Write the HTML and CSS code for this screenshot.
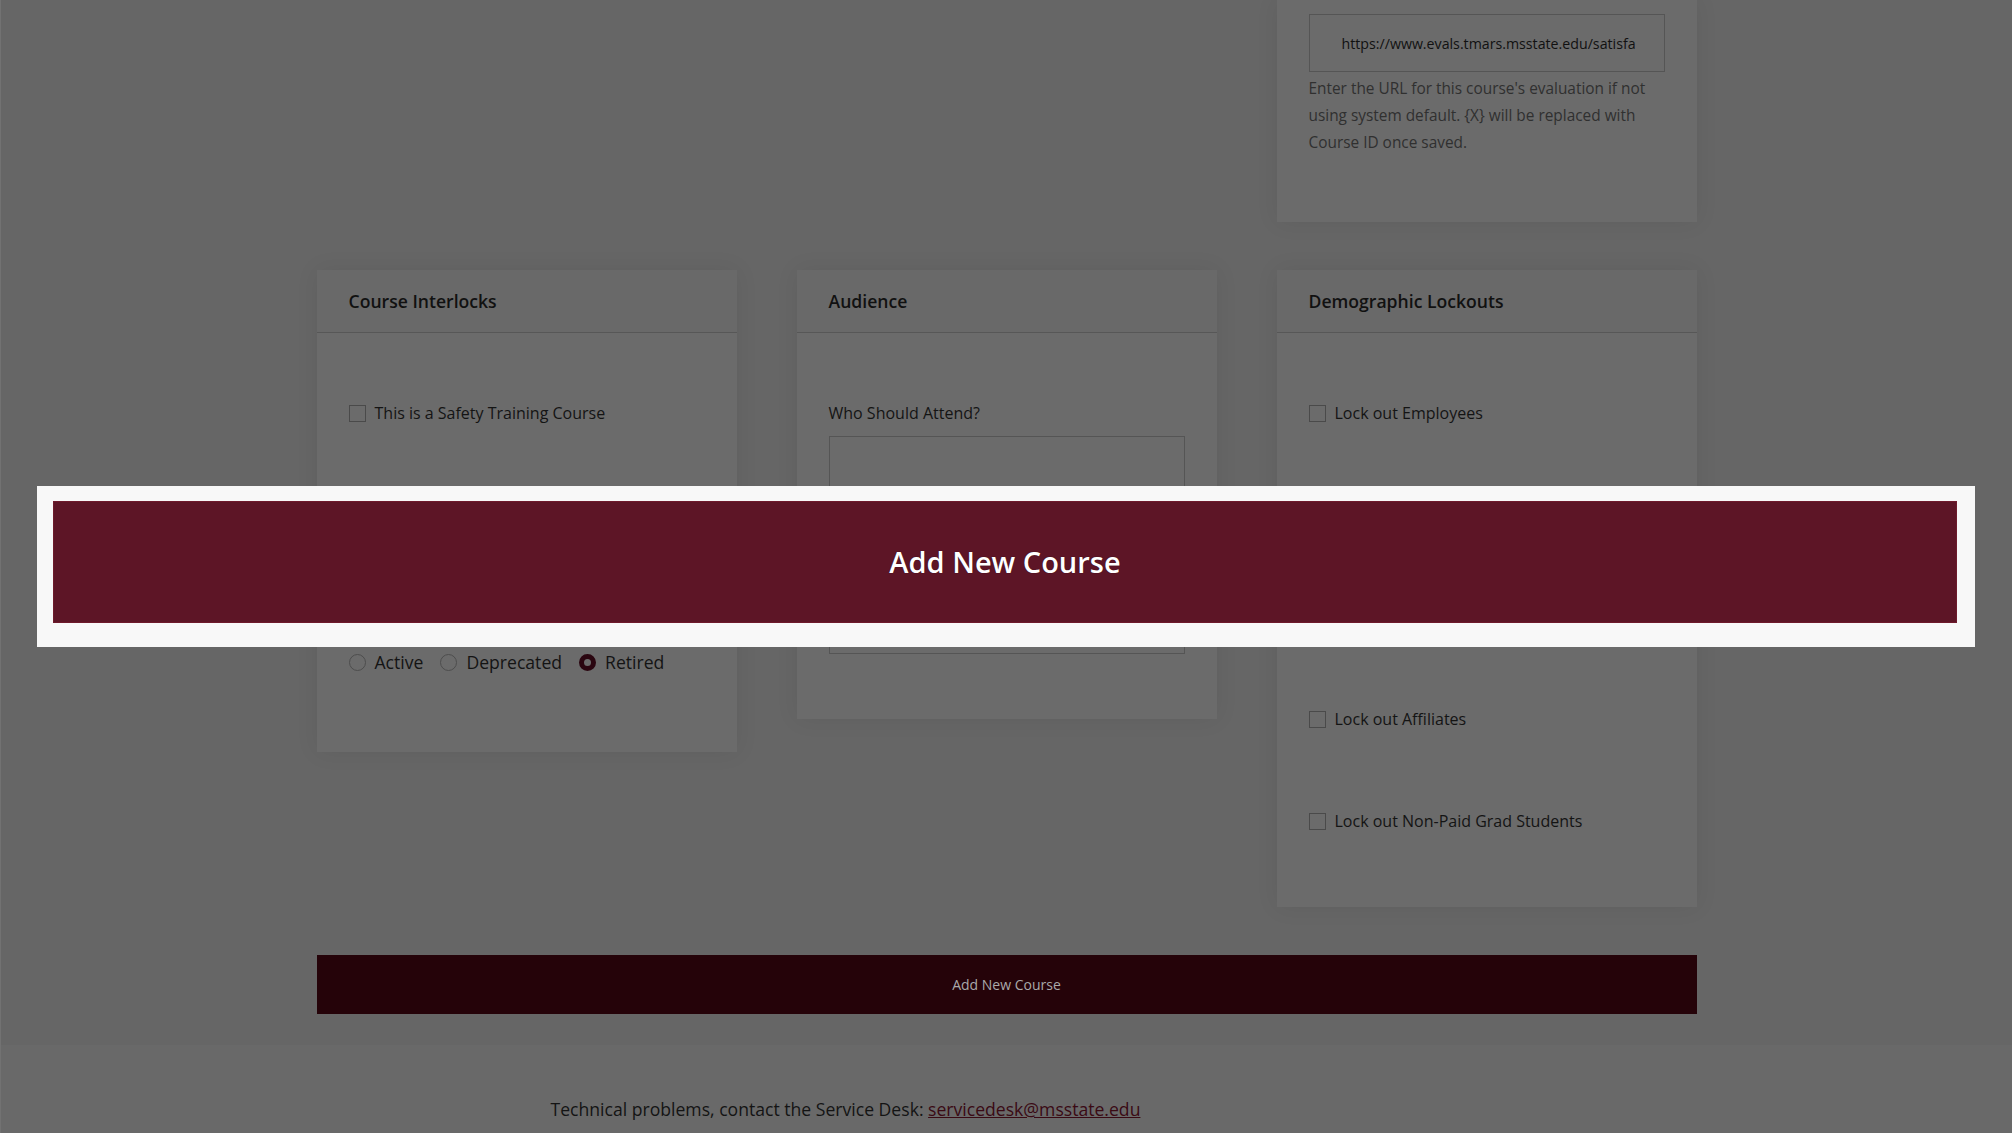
FILE: index.html
```html
<!DOCTYPE html>
<html lang="en">
<head>
<meta charset="utf-8">
<title>Add New Course</title>
<link rel="stylesheet" href="styles.css">
</head>
<body>
<div class="page">
  <main class="main">
    <div class="grid grid-top">
      <div class="cell-empty"></div>
      <div class="cell-empty"></div>
      <section class="card card-top">
        <div class="card-body body-top">
          <div class="input-box"><span class="input-text">https://www.evals.tmars.msstate.edu/satisfa</span></div>
          <p class="help">Enter the URL for this course's evaluation if not using system default. {X} will be replaced with Course ID once saved.</p>
        </div>
      </section>
    </div>

    <div class="grid grid-main">
      <section class="card">
        <header class="card-head">Course Interlocks</header>
        <div class="card-body body-list">
          <label class="check-row"><span class="box"></span>This is a Safety Training Course</label>
          <label class="check-row"><span class="box"></span>Requires Prerequisite Course</label>
          <div class="status">
            <div class="field-label">Course Status</div>
            <div class="radios">
              <label class="radio"><span class="circle"></span>Active</label>
              <label class="radio"><span class="circle"></span>Deprecated</label>
              <label class="radio"><span class="circle checked"></span>Retired</label>
            </div>
          </div>
        </div>
      </section>

      <section class="card">
        <header class="card-head">Audience</header>
        <div class="card-body body-audience">
          <div class="field-label">Who Should Attend?</div>
          <div class="textarea"></div>
        </div>
      </section>

      <section class="card">
        <header class="card-head">Demographic Lockouts</header>
        <div class="card-body body-list body-demo">
          <label class="check-row"><span class="box"></span>Lock out Employees</label>
          <label class="check-row"><span class="box"></span>Lock out Students</label>
          <label class="check-row"><span class="box"></span>Lock out Graduate Assistants</label>
          <label class="check-row"><span class="box"></span>Lock out Affiliates</label>
          <label class="check-row"><span class="box"></span>Lock out Non-Paid Grad Students</label>
        </div>
      </section>
    </div>

    <div class="submit-bar">Add New Course</div>
  </main>

  <footer class="footer">
    <div class="footer-inner">Technical problems, contact the Service Desk: <a class="footer-link" href="#">servicedesk@msstate.edu</a></div>
  </footer>
</div>

<div class="tour-highlight">
  <div class="tour-button">Add New Course</div>
</div>
</body>
</html>
```

FILE: styles.css
```css
* { box-sizing: border-box; }

html, body {
  margin: 0;
  padding: 0;
  height: 100%;
  overflow: hidden;
}

body {
  background: #666666;
  font-family: "Open Sans", "Noto Sans", sans-serif;
  color: #141414;
  font-size: 16px;
}

.page {
  min-height: 100%;
  display: flex;
  flex-direction: column;
  border-left: 1px solid #727272;
}

.main {
  width: 1380px;
  margin: 0 auto;
}

.grid {
  display: grid;
  grid-template-columns: 420px 420px 420px;
  column-gap: 60px;
  align-items: start;
}

.grid-main {
  margin-top: 48px;
}

.card {
  background: #6b6b6b;
  box-shadow: 0 0 22px rgba(0, 0, 0, 0.07);
}

.card-head {
  height: 63px;
  padding: 0 32px;
  display: flex;
  align-items: center;
  font-size: 17.6px;
  font-weight: 600;
  color: #111111;
  background: #696969;
  border-bottom: 1px solid #575757;
}

.card-body {
  padding: 0 32px;
}

.body-top {
  padding-top: 14px;
  padding-bottom: 66px;
}

.input-box {
  height: 58px;
  border: 1px solid #555555;
  padding: 0 32px;
  display: flex;
  align-items: center;
  white-space: nowrap;
  overflow: hidden;
  font-size: 14.2px;
  color: #111111;
}

.help {
  margin: 3px 0 0;
  font-size: 15.4px;
  line-height: 27px;
  color: #303030;
}

.body-list {
  padding-top: 29px;
  padding-bottom: 35px;
}

.check-row {
  height: 102px;
  display: flex;
  align-items: center;
  line-height: 27px;
}

.box {
  width: 17px;
  height: 17px;
  border: 1px solid #4a4a4a;
  margin-right: 9px;
  flex: none;
}

.status {
  padding-top: 46px;
  padding-bottom: 41px;
}

.field-label {
  line-height: 27px;
}

.radios {
  margin-top: 10px;
  display: flex;
  align-items: center;
  gap: 17px;
  line-height: 27px;
  font-size: 17.6px;
}

.radio {
  display: flex;
  align-items: center;
}

.circle {
  width: 17px;
  height: 17px;
  border-radius: 50%;
  border: 1px solid #4d4d4d;
  margin-right: 9px;
  flex: none;
}

.circle.checked {
  border: 5px solid #2a0610;
  background: #6b6b6b;
}

.body-audience {
  padding-top: 67px;
  padding-bottom: 65px;
}

.body-audience .field-label {
  margin-bottom: 9px;
}

.textarea {
  height: 218px;
  border: 1px solid #555555;
}

.submit-bar {
  margin-top: 48px;
  height: 59px;
  background: #250309;
  color: #a9a9a9;
  font-size: 14px;
  display: flex;
  align-items: center;
  justify-content: center;
}

.footer {
  margin-top: 31px;
  flex: 1;
  background: #696969;
  font-size: 17.6px;
}

.footer-inner {
  width: 1380px;
  margin: 0 auto;
  padding: 51px 0 0 234px;
  line-height: 27px;
}

.footer-link {
  color: #3a0a14;
  text-decoration: underline;
}

.tour-highlight {
  position: absolute;
  left: 37px;
  top: 486px;
  width: 1938px;
  height: 161px;
  background: #f8f8f8;
  padding: 15px 18px 24px 16px;
}

.tour-button {
  height: 100%;
  padding-bottom: 2px;
  background: #5d1526;
  border: 1px solid #6e1a2c;
  display: flex;
  align-items: center;
  justify-content: center;
  color: #ffffff;
  font-size: 29px;
  font-weight: 600;
  text-shadow: 0 0 1px rgba(0, 0, 0, 0.6);
}
```
